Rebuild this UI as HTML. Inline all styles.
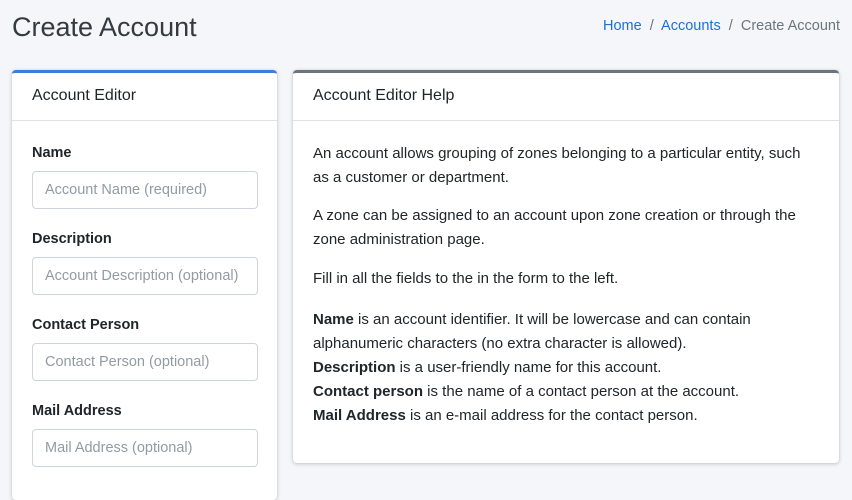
<!DOCTYPE html>
<html><head><style>
*{box-sizing:border-box;margin:0;padding:0}
body{width:852px;height:485px;background:#f4f6f9;font-family:"Liberation Sans",sans-serif;color:#212529;position:relative;overflow:hidden}
h1{position:absolute;left:12px;top:12px;font-size:27px;font-weight:400;color:#343a40}
.bc{position:absolute;right:12px;top:18px;font-size:14.5px;color:#6c757d}
.bc a{color:#1f6fd6;text-decoration:none}
.card{position:absolute;background:#fff;border-radius:4px;box-shadow:0 0 1px rgba(0,0,0,.15),0 1px 4px rgba(0,0,0,.2)}
.hd{height:48px;border-bottom:1px solid #dee2e6;padding:14px 20px;font-size:16px;color:#212529}
label{position:absolute;left:20px;font-weight:bold;font-size:14.5px}
.in{position:absolute;left:20px;width:226px;height:38px;border:1px solid #ced4da;border-radius:4px;padding:10px 12px;font-size:14.5px;color:#939ba2;white-space:nowrap;overflow:hidden}
.p{position:absolute;left:20px;width:500px;font-size:15px;line-height:24px}
</style></head><body>
<h1>Create Account</h1>
<div class="bc"><a>Home</a> &nbsp;/&nbsp; <a>Accounts</a> &nbsp;/&nbsp; Create Account</div>
<div class="card" style="left:12px;top:70px;width:265px;height:430px;border-top:3px solid #3f7be0">
<div class="hd">Account Editor</div>
<label style="top:72px">Name</label><div class="in" style="top:98px">Account Name (required)</div>
<label style="top:158px">Description</label><div class="in" style="top:184px">Account Description (optional)</div>
<label style="top:244px">Contact Person</label><div class="in" style="top:270px">Contact Person (optional)</div>
<label style="top:330px">Mail Address</label><div class="in" style="top:356px">Mail Address (optional)</div>
</div>
<div class="card" style="left:293px;top:70px;width:546px;height:393px;border-top:3px solid #6c757d">
<div class="hd">Account Editor Help</div>
<div class="p" style="top:69px">An account allows grouping of zones belonging to a particular entity, such as a customer or department.</div>
<div class="p" style="top:131px">A zone can be assigned to an account upon zone creation or through the zone administration page.</div>
<div class="p" style="top:194px">Fill in all the fields to the in the form to the left.</div>
<div class="p" style="top:235px"><b>Name</b> is an account identifier. It will be lowercase and can contain alphanumeric characters (no extra character is allowed).<br><b>Description</b> is a user-friendly name for this account.<br><b>Contact person</b> is the name of a contact person at the account.<br><b>Mail Address</b> is an e-mail address for the contact person.</div>
</div>
</body></html>
